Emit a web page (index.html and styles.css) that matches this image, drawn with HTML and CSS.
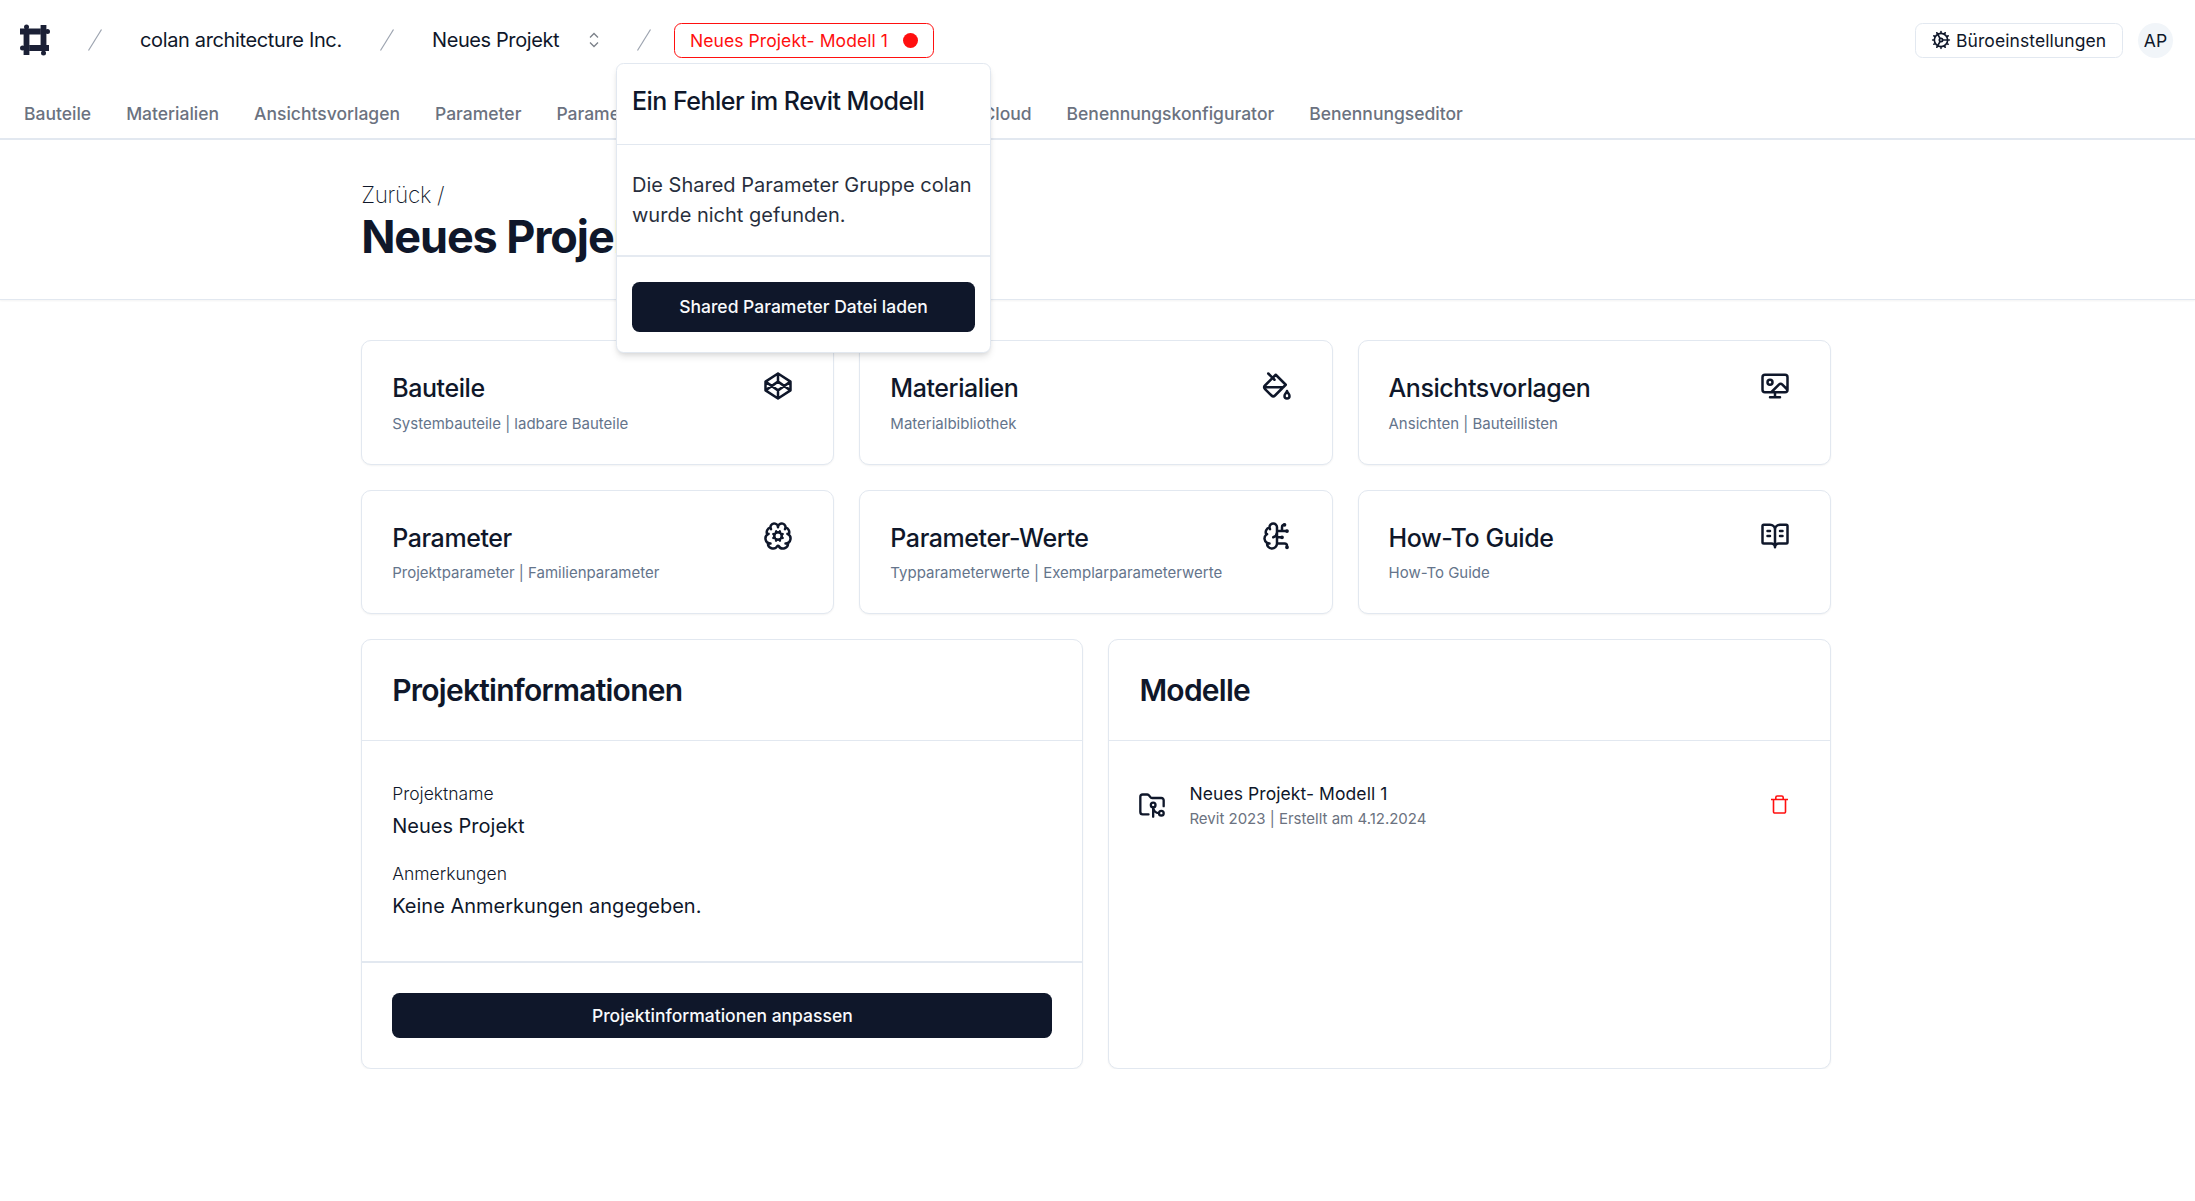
FILE: index.html
```
<!DOCTYPE html>
<html lang="de">
<head>
    <meta charset="UTF-8">
    <meta name="viewport" content="width=device-width, initial-scale=1.0">
    <title>Neues Projekt</title>
    <link rel="stylesheet" href="styles.css">
</head>
<body>
    <header class="header">
        <div class="topbar">
            <svg class="logo" viewBox="0 0 30 32">
                <circle cx="6.500" cy="3" r="2.500" /><circle cx="27.500" cy="7.500" r="2.500" />
                <circle cx="2.500" cy="24" r="2.500" /><circle cx="23.500" cy="29" r="2.500" />
                <path d="M0 7.500h20.500M6.500 10.500v20.500M23.500 1v20M9.500 24h19.500" />
            </svg>
            <svg class="slash" viewBox="0 0 14 22"><path d="M.5 21.500 13.500.5" /></svg>
            <a class="crumb crumb-office">colan architecture Inc.</a>
            <svg class="slash" viewBox="0 0 14 22"><path d="M.5 21.500 13.500.5" /></svg>
            <a class="crumb crumb-project">Neues Projekt</a>
            <svg class="sort" viewBox="0 0 10 16"><path d="M1 5.500 5 1.500l4 4M1 10.500l4 4 4-4" /></svg>
            <svg class="slash" viewBox="0 0 14 22"><path d="M.5 21.500 13.500.5" /></svg>
            <div class="model">
                <button class="model-button">Neues Projekt- Modell 1<span class="dot"></span></button>
                <div class="popover">
                    <h3 class="popover-title">Ein Fehler im Revit Modell</h3>
                    <p class="popover-text">Die Shared Parameter Gruppe colan wurde nicht gefunden.</p>
                    <div class="popover-footer">
                        <button class="button">Shared Parameter Datei laden</button>
                    </div>
                </div>
            </div>
            <button class="settings">
                <svg class="icon" viewBox="0 0 24 24"><path d="M12 20a8 8 0 1 0 0-16 8 8 0 0 0 0 16ZM12 14a2 2 0 1 0 0-4 2 2 0 0 0 0 4ZM12 2v2M12 22v-2M17 20.660l-1-1.730M11 10.270 7 3.340M20.660 17l-1.730-1M3.340 7l1.730 1M14 12h8M2 12h2M20.660 7l-1.730 1M3.340 17l1.730-1M17 3.340l-1 1.730M11 13.730l-4 6.930" /></svg>
                Büroeinstellungen
            </button>
            <span class="avatar">AP</span>
        </div>
        <nav class="nav">
            <a>Bauteile</a>
            <a>Materialien</a>
            <a>Ansichtsvorlagen</a>
            <a>Parameter</a>
            <a class="nav-values">Parameter-Werte</a>
            <a>Cloud</a>
            <a>Benennungskonfigurator</a>
            <a>Benennungseditor</a>
        </nav>
    </header>

    <section class="hero">
        <a class="back">Zurück /</a>
        <h1>Neues Projekt</h1>
    </section>

    <main class="content">
        <div class="tiles">
            <a class="tile">
                <div>
                    <h3>Bauteile</h3>
                    <p>Systembauteile | ladbare Bauteile</p>
                </div>
                <svg class="icon" viewBox="0 0 24 24"><path d="M12 2l10 6.500v7L12 22 2 15.500v-7ZM12 22v-6.500M22 8.500l-10 7-10-7M2 15.500l10-7 10 7M12 2v6.500" /></svg>
            </a>
            <a class="tile">
                <div>
                    <h3>Materialien</h3>
                    <p>Materialbibliothek</p>
                </div>
                <svg class="icon" viewBox="0 0 24 24"><path d="m19 11-8-8-8.600 8.600a2 2 0 0 0 0 2.800l5.200 5.200c.8.8 2 .8 2.800 0L19 11ZM5 2l5 5M2 13h15M22 20a2 2 0 1 1-4 0c0-1.600 1.700-2.400 2-4 .3 1.600 2 2.400 2 4Z" /></svg>
            </a>
            <a class="tile">
                <div>
                    <h3>Ansichtsvorlagen</h3>
                    <p>Ansichten | Bauteillisten</p>
                </div>
                <svg class="icon" viewBox="0 0 24 24"><circle cx="8" cy="9" r="2" /><path d="m9 17 6.100-6.100a2 2 0 0 1 2.810.01L22 15V5a2 2 0 0 0-2-2H4a2 2 0 0 0-2 2v10a2 2 0 0 0 2 2h16a2 2 0 0 0 2-2M8 21h8M12 17v4" /></svg>
            </a>
            <a class="tile">
                <div>
                    <h3>Parameter</h3>
                    <p>Projektparameter | Familienparameter</p>
                </div>
                <svg class="icon" viewBox="0 0 24 24">
                    <circle cx="12" cy="12" r="3" />
                    <path d="m10.852 14.772-.383.923M10.852 9.228l-.383-.923M13.148 14.772l.382.924M13.531 8.305l-.383.923M14.772 10.852l.923-.383M14.772 13.148l.923.383M9.228 10.852l-.923-.383M9.228 13.148l-.923.383" />
                    <path d="M17.598 6.500A3 3 0 1 0 12 5a3 3 0 0 0-5.630-1.446 3 3 0 0 0-.368 1.571 4 4 0 0 0-2.525 5.771M17.998 5.125a4 4 0 0 1 2.525 5.771M19.505 10.294a4 4 0 0 1-1.500 7.706M4.032 17.483A4 4 0 0 0 11.464 20c.18-.311.892-.311 1.072 0a4 4 0 0 0 7.432-2.516M4.500 10.291A4 4 0 0 0 6 18M6.002 5.125a3 3 0 0 0 .4 1.375" />
                </svg>
            </a>
            <a class="tile">
                <div>
                    <h3>Parameter-Werte</h3>
                    <p>Typparameterwerte | Exemplarparameterwerte</p>
                </div>
                <svg class="icon" viewBox="0 0 24 24">
                    <path d="M12 5a3 3 0 1 0-5.997.125 4 4 0 0 0-2.526 5.770 4 4 0 0 0 .556 6.588A4 4 0 1 0 12 18ZM9 13a4.500 4.500 0 0 0 3-4M6.003 5.125A3 3 0 0 0 6.401 6.500M3.477 10.896a4 4 0 0 1 .585-.396M6 18a4 4 0 0 1-1.967-.516M12 13h4M12 18h6a2 2 0 0 1 2 2v1M12 8h8M16 8V5a2 2 0 0 1 2-2" />
                    <circle cx="16" cy="13" r=".5" /><circle cx="18" cy="3" r=".5" /><circle cx="20" cy="21" r=".5" /><circle cx="20" cy="8" r=".5" />
                </svg>
            </a>
            <a class="tile">
                <div>
                    <h3>How-To Guide</h3>
                    <p>How-To Guide</p>
                </div>
                <svg class="icon" viewBox="0 0 24 24"><path d="M12 7v14M16 12h2M16 8h2M3 18a1 1 0 0 1-1-1V4a1 1 0 0 1 1-1h5a4 4 0 0 1 4 4 4 4 0 0 1 4-4h5a1 1 0 0 1 1 1v13a1 1 0 0 1-1 1h-6a3 3 0 0 0-3 3 3 3 0 0 0-3-3zM6 12h2M6 8h2" /></svg>
            </a>
        </div>

        <div class="panels">
            <section class="panel">
                <h2>Projektinformationen</h2>
                <dl class="info">
                    <dt>Projektname</dt>
                    <dd>Neues Projekt</dd>
                    <dt>Anmerkungen</dt>
                    <dd>Keine Anmerkungen angegeben.</dd>
                </dl>
                <div class="panel-footer">
                    <button class="button">Projektinformationen anpassen</button>
                </div>
            </section>
            <section class="panel">
                <h2>Modelle</h2>
                <div class="model-row">
                    <svg class="icon" viewBox="0 0 24 24"><path d="M9 20H4a2 2 0 0 1-2-2V5a2 2 0 0 1 2-2h3.900a2 2 0 0 1 1.690.9l.81 1.200a2 2 0 0 0 1.670.9H20a2 2 0 0 1 2 2v5" /><circle cx="13" cy="12" r="2" /><path d="M18 19c-2.800 0-5-2.200-5-5v8" /><circle cx="20" cy="19" r="2" /></svg>
                    <div class="model-info">
                        <strong>Neues Projekt- Modell 1</strong>
                        <span>Revit 2023 | Erstellt am 4.12.2024</span>
                    </div>
                    <svg class="trash" viewBox="0 0 17 19"><path d="M0 4.500h17M4.800 4.500V2.500a1.500 1.500 0 0 1 1.500-1.500h4.400a1.500 1.500 0 0 1 1.500 1.500v2M2.500 4.500v12.200a1.300 1.300 0 0 0 1.300 1.300h9.400a1.300 1.300 0 0 0 1.300-1.300V4.500" /></svg>
                </div>
            </section>
        </div>
    </main>
</body>
</html>
```
FILE: styles.css
```
* {
    box-sizing: border-box;
}

body {
    margin: 0;
    background-color: #fff;
    color: #0f172a;
    font-family: Inter, sans-serif;
    font-size: 20px;
    line-height: 30px;
}

h1, h2, h3, p, dl, dd {
    margin: 0;
}

button {
    font-family: inherit;
    color: inherit;
    cursor: pointer;
}

.icon {
    width: 30px;
    height: 30px;
    flex-shrink: 0;
    fill: none;
    stroke: currentColor;
    stroke-width: 2;
    stroke-linecap: round;
    stroke-linejoin: round;
}

.button {
    width: 100%;
    height: 45px;
    border: none;
    border-radius: 7.5px;
    background-color: #0f172a;
    color: #f8fafc;
    font-size: 17.5px;
    font-weight: 500;
}

/* Header */

.header {
    height: 140px;
    border-bottom: 2px solid #e2e8f0;
}

.topbar {
    display: flex;
    align-items: center;
    height: 80px;
    padding: 0 22px 0 20px;
}

.logo {
    width: 30px;
    height: 32px;
    fill: #1b2036;
    stroke: #1b2036;
    stroke-width: 5.8;
}

.logo circle {
    stroke: none;
}

.slash {
    width: 14px;
    height: 22px;
    margin: 0 38px;
    fill: none;
    stroke: #9ca3af;
    stroke-width: 1.2;
}

.sort {
    width: 10px;
    height: 16px;
    margin-left: 30px;
    fill: none;
    stroke: #7b8089;
    stroke-width: 1.3;
}

.crumb {
    font-size: 20px;
    letter-spacing: -0.4px;
    white-space: nowrap;
}

.crumb-office {
    width: 202px;
    letter-spacing: -0.36px;
}

.crumb-project {
    width: 127px;
}

.model {
    position: relative;
    margin-left: -15px;
}

.model-button {
    display: flex;
    align-items: center;
    justify-content: space-between;
    width: 260px;
    height: 35px;
    padding: 0 15px;
    border: 1px solid #ff0f0f;
    border-radius: 7.5px;
    background-color: #fff;
    color: #ff0f0f;
    font-size: 17.5px;
    letter-spacing: 0.08px;
}

.dot {
    width: 15px;
    height: 15px;
    border-radius: 50%;
    background-color: #ff0f0f;
}

.popover {
    position: absolute;
    top: 40px;
    left: -58px;
    z-index: 10;
    width: 375px;
    border: 1px solid #e2e8f0;
    border-radius: 7.5px;
    background-color: #fff;
    box-shadow: 0 5px 7.5px -1px rgba(0, 0, 0, 0.1), 0 2.5px 5px -2.5px rgba(0, 0, 0, 0.1);
}

.popover-title {
    height: 81px;
    padding: 22px 15px 0;
    border-bottom: 1px solid #e2e8f0;
    font-size: 25px;
    font-weight: 500;
    letter-spacing: -0.52px;
}

.popover-text {
    height: 112px;
    padding: 25px 15px 0;
    border-bottom: 2px solid #e2e8f0;
    opacity: 0.9;
}

.popover-footer {
    padding: 25px 15px 20px;
}

.popover-footer .button {
    height: 50px;
}

.settings {
    display: flex;
    align-items: center;
    gap: 5px;
    width: 208px;
    height: 35px;
    margin-left: auto;
    padding: 0 15px;
    border: 1px solid #e2e8f0;
    border-radius: 7.5px;
    background-color: #fff;
    font-size: 17.5px;
    letter-spacing: 0.08px;
}

.settings .icon {
    width: 20px;
    height: 20px;
}

.avatar {
    width: 35px;
    height: 35px;
    margin-left: 15px;
    border-radius: 50%;
    background-color: #f1f5f9;
    font-size: 17.5px;
    line-height: 35px;
    text-align: center;
}

.nav {
    display: flex;
    gap: 35px;
    padding: 19px 24px 0;
    color: #6b7280;
    font-size: 17.5px;
    font-weight: 500;
}

.nav-values {
    width: 391px;
}

/* Title */

.hero {
    height: 160px;
    padding: 40px 361.2px 0;
    border-bottom: 1px solid #e2e8f0;
    box-shadow: 0 1px 2px rgba(0, 0, 0, 0.05);
}

.back {
    display: block;
    font-size: 22.5px;
    font-weight: 200;
    letter-spacing: -0.3px;
}

.hero h1 {
    margin-top: 2px;
    font-size: 45px;
    font-weight: 700;
    line-height: 50px;
    letter-spacing: -1.125px;
}

/* Cards */

.content {
    width: 1469.5px;
    margin: 40.4px 0 0 361.2px;
}

.tiles {
    display: grid;
    grid-template-columns: repeat(3, 1fr);
    grid-template-rows: repeat(2, 124.4px);
    gap: 25px;
}

.tile,
.panel {
    border: 1px solid #e2e8f0;
    border-radius: 10px;
    background-color: #fff;
    box-shadow: 0 1px 2px rgba(0, 0, 0, 0.05);
}

.tile {
    display: flex;
    justify-content: space-between;
    padding: 30px 40px 0 30px;
}

.tile h3 {
    margin-top: 2px;
    font-size: 25px;
    font-weight: 500;
    line-height: 31px;
    letter-spacing: -0.42px;
}

.tile p {
    margin-top: 8.3px;
    color: #64748b;
    font-size: 15px;
    line-height: 22px;
}

.panels {
    display: grid;
    grid-template-columns: repeat(2, 1fr);
    gap: 25px;
    margin-top: 25px;
}

.panel {
    height: 430px;
}

.panel h2 {
    height: 101px;
    padding: 31px 30px 0;
    border-bottom: 1px solid #e2e8f0;
    font-size: 30px;
    font-weight: 600;
    line-height: 38px;
    letter-spacing: -0.75px;
}

.info {
    height: 222px;
    padding: 40px 30px 0;
    border-bottom: 2px solid #e2e8f0;
}

.info dt {
    font-size: 17.5px;
    font-weight: 300;
    line-height: 25px;
}

.info dd {
    margin: 5px 0 20px;
}

.panel-footer {
    padding: 30px 30px 0;
}

.model-row {
    display: flex;
    align-items: center;
    padding: 37px 41.5px 0 29px;
}

.model-row .icon {
    width: 28px;
    height: 28px;
}

.model-info {
    display: flex;
    flex-direction: column;
    flex: 1;
    margin-left: 23px;
    padding-top: 2px;
}

.model-info strong {
    font-size: 17.5px;
    font-weight: 400;
    line-height: 27px;
    letter-spacing: 0.08px;
}

.model-info span {
    color: #6b7280;
    font-size: 15px;
    line-height: 24px;
}

.trash {
    width: 17px;
    height: 19px;
    fill: none;
    stroke: #ff0f0f;
    stroke-width: 1.6;
}
```
